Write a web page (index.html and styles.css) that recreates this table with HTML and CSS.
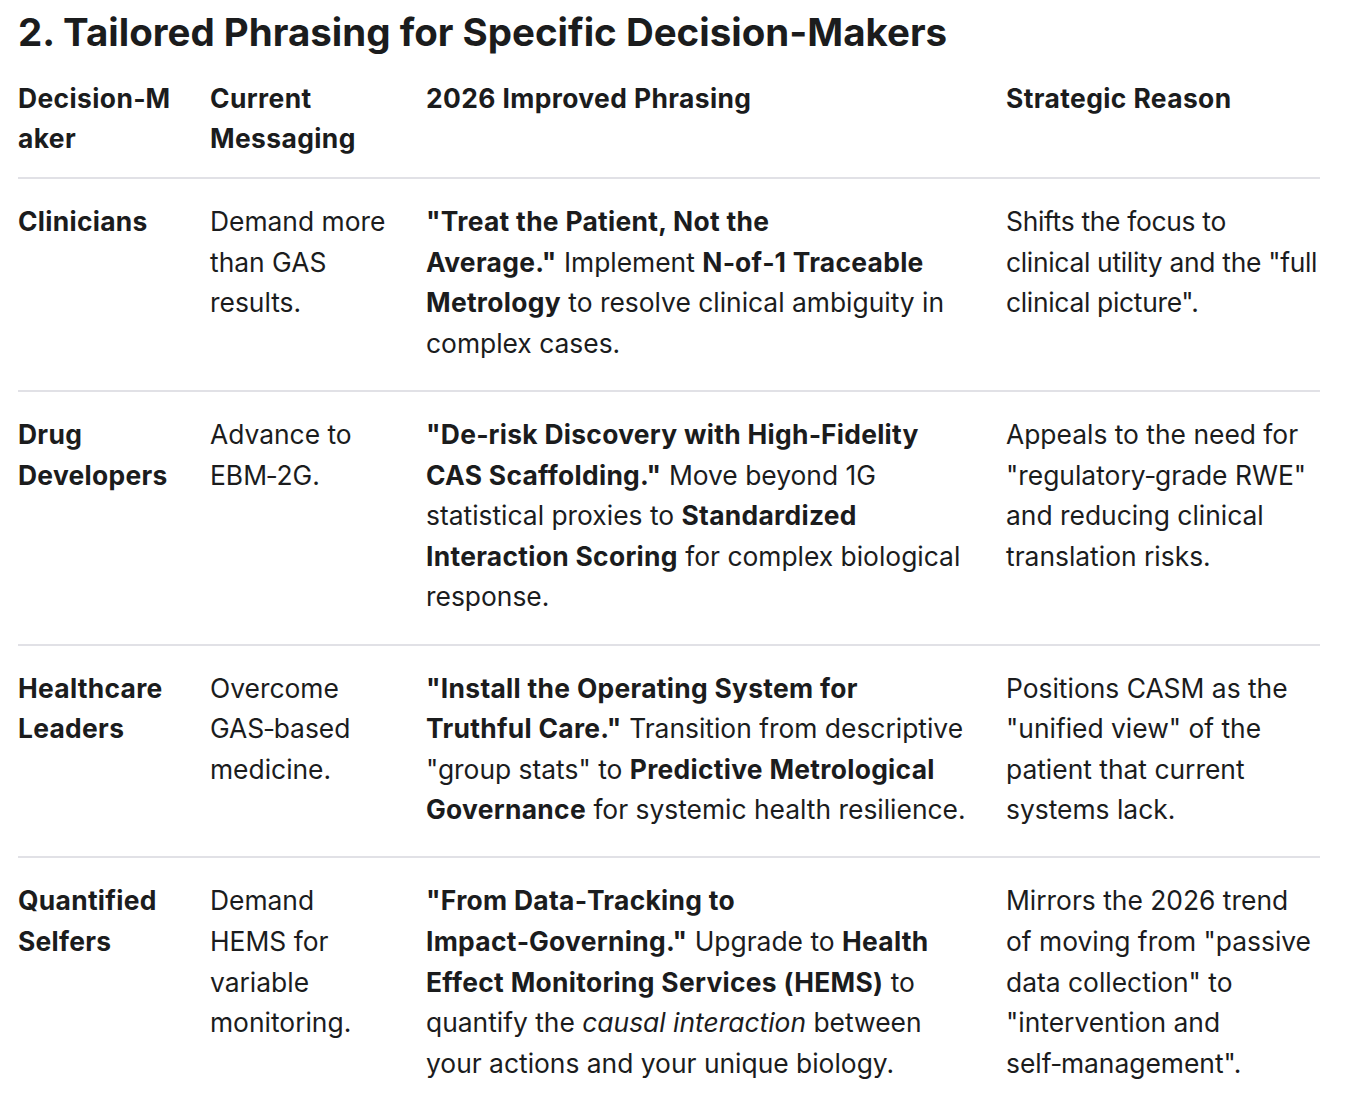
FILE: index.html
```html
<!DOCTYPE html>
<html lang="en">
<head>
<meta charset="utf-8">
<title>Tailored Phrasing for Specific Decision-Makers</title>
<link rel="stylesheet" href="styles.css">
</head>
<body>
<main class="page">
  <h2 class="title">2. Tailored Phrasing for Specific Decision-Makers</h2>
  <table class="grid">
    <colgroup>
      <col class="c1"><col class="c2"><col class="c3"><col class="c4">
    </colgroup>
    <thead>
      <tr>
        <th>Decision&#8209;Maker</th>
        <th>Current Messaging</th>
        <th>2026 Improved Phrasing</th>
        <th>Strategic Reason</th>
      </tr>
    </thead>
    <tbody>
      <tr>
        <td><strong>Clinicians</strong></td>
        <td>Demand more than GAS results.</td>
        <td><strong>"Treat the Patient, Not the Average."</strong>&nbsp;Implement <strong>N&#8209;of&#8209;1 Traceable Metrology</strong> to resolve clinical ambiguity in complex cases.</td>
        <td class="snug">Shifts the focus to<br>clinical utility and the "full clinical picture".</td>
      </tr>
      <tr>
        <td><strong>Drug Developers</strong></td>
        <td>Advance to EBM&#8209;2G.</td>
        <td><strong>"De&#8209;risk Discovery with High&#8209;Fidelity<br>CAS Scaffolding."</strong>&nbsp;Move beyond 1G<br>statistical proxies to <strong>Standardized<br>Interaction Scoring</strong> for complex biological<br>response.</td>
        <td>Appeals to the need for "regulatory&#8209;grade RWE" and reducing clinical translation risks.</td>
      </tr>
      <tr>
        <td><strong>Healthcare Leaders</strong></td>
        <td>Overcome GAS&#8209;based medicine.</td>
        <td><strong>"Install the Operating System for<br>Truthful Care."</strong>&nbsp;Transition from descriptive<br>"group stats" to <strong>Predictive Metrological<br>Governance</strong> for systemic health resilience.</td>
        <td>Positions CASM as the "unified view" of the patient that current systems lack.</td>
      </tr>
      <tr>
        <td><strong>Quantified Selfers</strong></td>
        <td>Demand HEMS for variable monitoring.</td>
        <td><strong>"From Data&#8209;Tracking to Impact&#8209;Governing."</strong>&nbsp;Upgrade to <strong>Health Effect Monitoring Services (HEMS)</strong> to quantify the <em>causal interaction</em> between your actions and your unique biology.</td>
        <td>Mirrors the 2026 trend of moving from "passive data collection" to "intervention and self&#8209;management".</td>
      </tr>
    </tbody>
  </table>
</main>
</body>
</html>
```
FILE: styles.css
```css
html, body {
  margin: 0;
  padding: 0;
  background: #ffffff;
}

body {
  font-family: Inter, "Open Sans", "Noto Sans", sans-serif;
  color: #1b1c1d;
}

.page {
  padding: 0 26px 0 18px;
}

.title {
  margin: 0;
  padding-top: 7px;
  font-size: 38.5px;
  line-height: 50px;
  font-weight: 700;
  letter-spacing: 0;
}

.grid {
  width: 1302px;
  table-layout: fixed;
  border-collapse: collapse;
  border-spacing: 0;
  font-size: 26.4px;
  line-height: 40.6px;
}

.c1 { width: 192px; }
.c2 { width: 216px; }
.c3 { width: 580px; }
.c4 { width: 314px; }

.grid th,
.grid td {
  text-align: left;
  vertical-align: top;
  padding: 22px 32px 26.5px 0;
  overflow-wrap: anywhere;
}

.grid td:nth-child(3) {
  padding-right: 28px;
}

.grid th:last-child,
.grid td:last-child {
  padding-right: 0;
}

.grid th {
  font-weight: 700;
  letter-spacing: 0.4px;
  padding-top: 20.5px;
  padding-bottom: 18.5px;
}

.grid thead tr,
.grid tbody tr {
  border-bottom: 2px solid #e1e1e6;
}

.grid tbody tr:last-child {
  border-bottom: none;
}

.grid strong {
  font-weight: 700;
  letter-spacing: 0.3px;
}

.grid em {
  font-style: italic;
}

.grid td.snug {
  letter-spacing: -0.3px;
}
```
